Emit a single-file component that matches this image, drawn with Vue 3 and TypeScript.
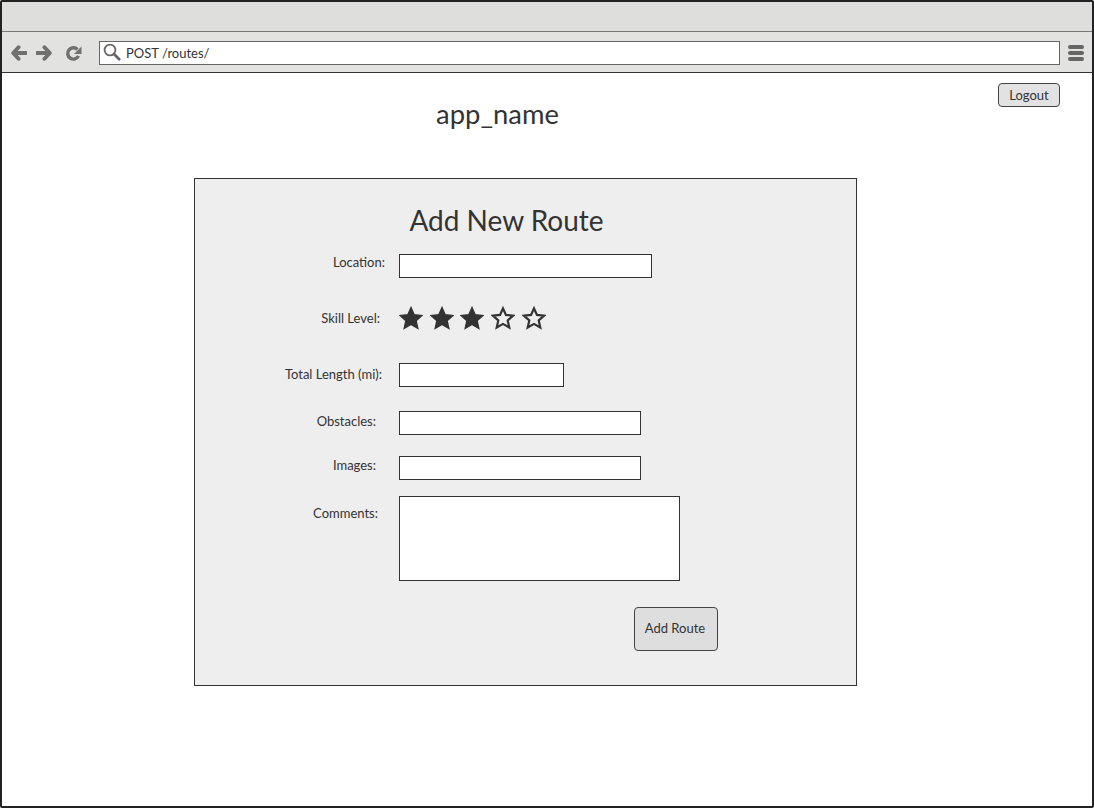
<script setup lang="ts">
interface Field {
  label: string;
  kind: "input" | "stars" | "area";
  width?: number;
  height?: number;
  gap: number;
  inset: number;
  labelTop: number;
}
const fields: Field[] = [
  { label: "Location:", kind: "input", width: 253, height: 24, gap: 0, inset: 14, labelTop: 0 },
  { label: "Skill Level:", kind: "stars", height: 24, gap: 32, inset: 19, labelTop: 0 },
  { label: "Total Length (mi):", kind: "input", width: 165, height: 24, gap: 29, inset: 17, labelTop: 3 },
  { label: "Obstacles:", kind: "input", width: 242, height: 24, gap: 24, inset: 23, labelTop: 2 },
  { label: "Images:", kind: "input", width: 242, height: 24, gap: 21, inset: 23, labelTop: 1 },
  { label: "Comments:", kind: "area", width: 281, height: 85, gap: 16, inset: 21, labelTop: 9 },
];
const stars = [true, true, true, false, false];
const starPath = "M12 1.6l3.2 7.1 7.7.8-5.8 5.2 1.7 7.6L12 18.4l-6.8 3.9 1.7-7.6L1.100 9.500l7.7-.8z";
</script>

<template>
  <div class="window">
    <div class="titlebar"></div>
    <div class="toolbar">
      <svg class="nav" width="16" height="16" viewBox="0 0 18 18">
        <path d="M8.500 2.500 2.500 9l6 6.500M3 9h14" fill="none" stroke="#707070" stroke-width="4.400" stroke-linecap="round" stroke-linejoin="round" />
      </svg>
      <svg class="nav" width="16" height="16" viewBox="0 0 18 18">
        <path d="M9.500 2.500 15.500 9l-6 6.500M15 9H1" fill="none" stroke="#707070" stroke-width="4.400" stroke-linecap="round" stroke-linejoin="round" />
      </svg>
      <svg class="reload" width="17" height="17" viewBox="0 0 18 18">
        <path d="M14.300 11.500A6 6 0 1 1 13.200 4.800" fill="none" stroke="#707070" stroke-width="3.600" />
        <path d="M17.500 1.500v8h-8z" fill="#707070" />
      </svg>
      <div class="address">
        <svg class="search" width="18" height="18" viewBox="0 0 18 18">
          <circle cx="7" cy="7" r="5.400" fill="none" stroke="#666" stroke-width="1.800" />
          <path d="M11 11 16.200 16.200" fill="none" stroke="#666" stroke-width="2.800" stroke-linecap="round" />
        </svg>
        <span>POST /routes/</span>
      </div>
      <div class="menu"><i></i><i></i><i></i></div>
    </div>
    <main class="content">
      <div class="top">
        <h1 class="app-name">app_name</h1>
        <button class="logout" type="button">Logout</button>
      </div>
      <form class="panel" @submit.prevent>
        <h2 class="heading">Add New Route</h2>
        <div
          v-for="f in fields"
          :key="f.label"
          class="row"
          :style="{ marginTop: f.gap + 'px' }"
        >
          <label
            class="label"
            :style="{ paddingRight: f.inset + 'px', paddingTop: f.labelTop + 'px' }"
          >{{ f.label }}</label>
          <div v-if="f.kind === 'stars'" class="stars">
            <svg
              v-for="(on, i) in stars"
              :key="i"
              width="24"
              height="24"
              :viewBox="on ? '0 0 24 24' : '-1 -1 26 26'"
            >
              <path
                :d="starPath"
                :fill="on ? '#333' : 'none'"
                stroke="#333"
                :stroke-width="on ? 1.4 : 2.4"
                stroke-linejoin="miter"
              />
            </svg>
          </div>
          <div v-else class="box" :style="{ width: f.width + 'px', height: f.height + 'px' }"></div>
        </div>
        <div class="actions">
          <button class="add" type="submit">Add Route</button>
        </div>
      </form>
    </main>
  </div>
</template>

<style>
html, body { margin: 0; background: #fff; }
</style>

<style scoped>
* { box-sizing: border-box; }
.window {
  width: 1094px;
  height: 808px;
  border: 2px solid #222;
  border-radius: 2px;
  background: #fff;
  font-family: Lato, "Liberation Sans", sans-serif;
  color: #333;
  overflow: hidden;
  display: flex;
  flex-direction: column;
}
.titlebar {
  height: 30px;
  background: #dededd;
  border-bottom: 1px solid #777;
  flex: none;
}
.toolbar {
  height: 41px;
  background: #e2e2e1;
  border-bottom: 1px solid #333;
  flex: none;
  display: flex;
  align-items: center;
  padding: 2px 0 0 9px;
}
.nav { margin-right: 9px; }
.reload { margin-left: 4px; }
.address {
  width: 961px;
  height: 24px;
  margin-left: 17px;
  border: 1px solid #666;
  background: #fff;
  display: flex;
  align-items: center;
  font-size: 13px;
  color: #333;
}
.search { margin: -3px 5px 0 3px; }
.menu {
  margin-left: 8px;
  width: 16px;
  display: flex;
  flex-direction: column;
  gap: 2px;
}
.menu i {
  display: block;
  height: 4px;
  border-radius: 2px;
  background: #666;
}
.content {
  flex: 1;
  position: relative;
}
.top {
  height: 105px;
  position: relative;
}
.app-name {
  margin: 0;
  padding-top: 24px;
  text-align: center;
  font-size: 27.400px;
  line-height: 34px;
  font-weight: 400;
  width: 991px;
}
.logout {
  position: absolute;
  right: 32px;
  top: 10px;
  width: 62px;
  height: 24px;
  padding: 0;
  border: 1px solid #444;
  border-radius: 4px;
  background: #e2e2e2;
  font: 13px Lato, "Liberation Sans", sans-serif;
  color: #333;
}
.panel {
  margin-left: 192px;
  width: 663px;
  height: 508px;
  border: 1px solid #333;
  background: #eee;
}
.heading {
  margin: 0;
  padding-top: 24px;
  width: 623px;
  text-align: center;
  font-size: 28px;
  line-height: 34px;
  font-weight: 400;
  height: 75px;
}
.row {
  display: flex;
  align-items: flex-start;
}
.label {
  width: 204px;
  text-align: right;
  font-size: 13px;
  line-height: 17px;
}
.box {
  border: 1px solid #333;
  background: #fff;
  flex: none;
}
.stars {
  display: flex;
  gap: 6.700px;
  margin: -4px 0 4px;
  height: 24px;
}
.actions {
  margin-top: 26px;
  padding-left: 439px;
}
.add {
  width: 84px;
  height: 44px;
  padding: 0 2px 3px 0;
  border: 1px solid #444;
  border-radius: 4px;
  background: #dedede;
  font: 13px Lato, "Liberation Sans", sans-serif;
  color: #333;
}
</style>
